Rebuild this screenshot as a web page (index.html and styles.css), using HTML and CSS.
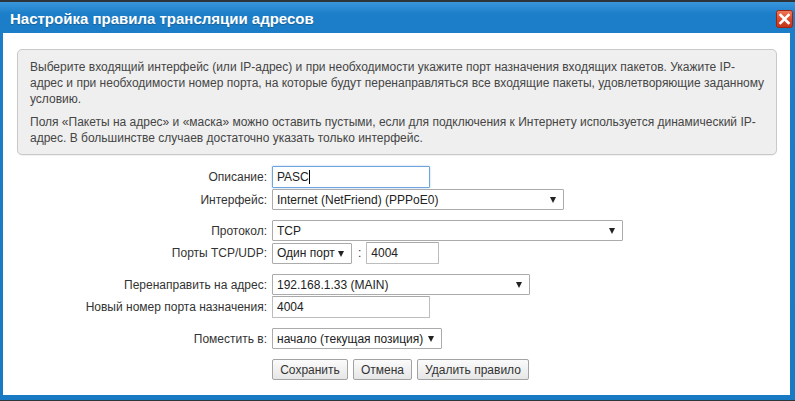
FILE: index.html
```html
<!DOCTYPE html>
<html lang="ru">
<head>
    <meta charset="UTF-8">
    <title>Настройка правила трансляции адресов</title>
    <link rel="stylesheet" href="styles.css">
</head>
<body>
    <div class="dialog">
        <div class="titlebar">
            <h1>Настройка правила трансляции адресов</h1>
            <button class="close-btn" type="button" title="Закрыть">
                <svg width="17" height="18" viewBox="0 0 17 18">
                    <defs>
                        <linearGradient id="closeGrad" x1="0" y1="0" x2="0" y2="1">
                            <stop offset="0" stop-color="#f07a5c"/>
                            <stop offset="0.5" stop-color="#dc4a2c"/>
                            <stop offset="1" stop-color="#c2331a"/>
                        </linearGradient>
                    </defs>
                    <rect x="0.5" y="0.5" width="16" height="17" rx="2" fill="url(#closeGrad)" stroke="#9c2410"/>
                    <path d="M4.5 5 L12.5 13 M12.5 5 L4.5 13" stroke="#fff" stroke-width="2.6" stroke-linecap="square"/>
                </svg>
            </button>
        </div>

        <div class="content">
            <!-- Help text -->
            <div class="info-box">
                <p>Выберите входящий интерфейс (или IP-адрес) и при необходимости укажите порт назначения входящих пакетов. Укажите IP-адрес и при необходимости номер порта, на которые будут перенаправляться все входящие пакеты, удовлетворяющие заданному условию.</p>
                <p>Поля «Пакеты на адрес» и «маска» можно оставить пустыми, если для подключения к Интернету используется динамический IP-адрес. В большинстве случаев достаточно указать только интерфейс.</p>
            </div>

            <form class="rule-form">
                <div class="row">
                    <label for="descr">Описание:</label>
                    <span class="caret-wrap">
                        <input type="text" id="descr" class="field focused w-desc" value="PASC">
                    </span>
                </div>
                <div class="row">
                    <label for="iface">Интерфейс:</label>
                    <span class="select w-iface">
                        <select id="iface">
                            <option>Internet (NetFriend) (PPPoE0)</option>
                        </select>
                    </span>
                </div>

                <div class="row group">
                    <label for="proto">Протокол:</label>
                    <span class="select w-proto">
                        <select id="proto">
                            <option>TCP</option>
                        </select>
                    </span>
                </div>
                <div class="row">
                    <label for="portMode">Порты TCP/UDP:</label>
                    <span class="select compact w-portmode">
                        <select id="portMode">
                            <option>Один порт</option>
                        </select>
                    </span>
                    <span class="colon">:</span>
                    <input type="text" class="field w-port" value="4004">
                </div>

                <div class="row group">
                    <label for="target">Перенаправить на адрес:</label>
                    <span class="select w-target">
                        <select id="target">
                            <option>192.168.1.33 (MAIN)</option>
                        </select>
                    </span>
                </div>
                <div class="row">
                    <label for="newPort">Новый номер порта назначения:</label>
                    <input type="text" id="newPort" class="field w-desc" value="4004">
                </div>

                <div class="row group">
                    <label for="place">Поместить в:</label>
                    <span class="select compact w-place">
                        <select id="place">
                            <option>начало (текущая позиция)</option>
                        </select>
                    </span>
                </div>

                <div class="row buttons">
                    <span class="spacer"></span>
                    <button type="button" class="btn btn-save">Сохранить</button>
                    <button type="button" class="btn btn-cancel">Отмена</button>
                    <button type="button" class="btn btn-delete">Удалить правило</button>
                </div>
            </form>
        </div>
    </div>
</body>
</html>
```

FILE: styles.css
```css
/* Reset */
* {
  margin: 0;
  padding: 0;
  box-sizing: border-box;
}

body {
  font-family: "Liberation Sans", Arial, sans-serif;
  font-size: 12px;
  background-color: #2f3438;
  color: #333;
  height: 100vh;
  overflow: hidden;
}

/* Dialog frame */
.dialog {
  margin-top: 2px;
  height: calc(100vh - 3px);
  display: flex;
  flex-direction: column;
  background: linear-gradient(#3996dc, #1c7ec8 12px, #197ac4);
}

.titlebar {
  height: 31px;
  display: flex;
  align-items: center;
  justify-content: space-between;
  padding: 0 2px 0 10px;
}

.titlebar h1 {
  font-size: 15px;
  font-weight: bold;
  color: #fff;
  text-shadow: 0 1px 1px rgba(0, 0, 0, 0.25);
  margin-top: 1px;
}

.close-btn {
  border: none;
  background: none;
  width: 17px;
  height: 18px;
  margin-top: 2px;
  cursor: pointer;
}

.close-btn svg {
  display: block;
}

.content {
  flex: 1;
  background-color: #fff;
  margin: 0 5px 5px 3px;
  padding-top: 16px;
}

/* Help box */
.info-box {
  margin: 0 13px 0 14px;
  padding: 9px 11px 8px 12px;
  background-color: #efefef;
  border: 1px solid #c9c9c9;
  border-radius: 5px;
  box-shadow: 0 1px 1px rgba(0, 0, 0, 0.06);
  color: #454545;
  line-height: 16px;
}

.info-box p + p {
  margin-top: 7px;
}

/* Form */
.rule-form {
  margin-top: 11px;
}

.row {
  display: flex;
  align-items: center;
  margin-bottom: 1px;
}

.row.group {
  margin-top: 10px;
}

.row label,
.row .spacer {
  width: 264px;
  margin-right: 5px;
  text-align: right;
  color: #333;
}

.field {
  height: 22px;
  padding: 0 4px;
  font-family: inherit;
  font-size: 12px;
  color: #222;
  border: 1px solid #bdbdbd;
  border-top-color: #a9a9a9;
  border-radius: 1px;
  outline: none;
  background-color: #fff;
}

.field.focused {
  border-color: #6fa4dc;
  box-shadow: 0 0 2px rgba(80, 150, 220, 0.5);
}

.caret-wrap {
  position: relative;
  display: inline-block;
}

.caret-wrap::after {
  content: "";
  position: absolute;
  left: 37px;
  top: 4px;
  width: 1px;
  height: 14px;
  background-color: #000;
}

/* Custom select */
.select {
  position: relative;
  display: inline-block;
  height: 21px;
}

.select select {
  appearance: none;
  -webkit-appearance: none;
  width: 100%;
  height: 100%;
  padding: 0 18px 0 4px;
  font-family: inherit;
  font-size: 12px;
  color: #222;
  background-color: #fff;
  border: 1px solid #ababab;
  border-radius: 1px;
  outline: none;
}

.select.compact select {
  padding-right: 10px;
}

.select::after {
  content: "";
  position: absolute;
  right: 8px;
  top: 8px;
  border-left: 3px solid transparent;
  border-right: 3px solid transparent;
  border-top: 6px solid #222;
  pointer-events: none;
}

.w-desc { width: 158px; }
.w-iface { width: 292px; }
.w-proto { width: 351px; }
.w-portmode { width: 80px; }
.w-port { width: 73px; }
.w-target { width: 258px; }
.w-place { width: 170px; }

.colon {
  margin: 0 5px 0 6px;
  color: #333;
}

/* Buttons */
.row.buttons {
  margin-top: 10px;
}

.btn {
  height: 21px;
  padding: 0;
  margin-right: 5px;
  font-family: inherit;
  font-size: 12px;
  color: #333;
  background: linear-gradient(#fbfbfb, #e6e6e6);
  border: 1px solid #a3a3a3;
  border-radius: 2px;
  cursor: pointer;
}

.btn-save { width: 76px; margin-right: 5px; }
.btn-cancel { width: 59px; margin-right: 5px; }
.btn-delete { width: 112px; }

.btn:hover {
  background: linear-gradient(#ffffff, #ececec);
}
```
